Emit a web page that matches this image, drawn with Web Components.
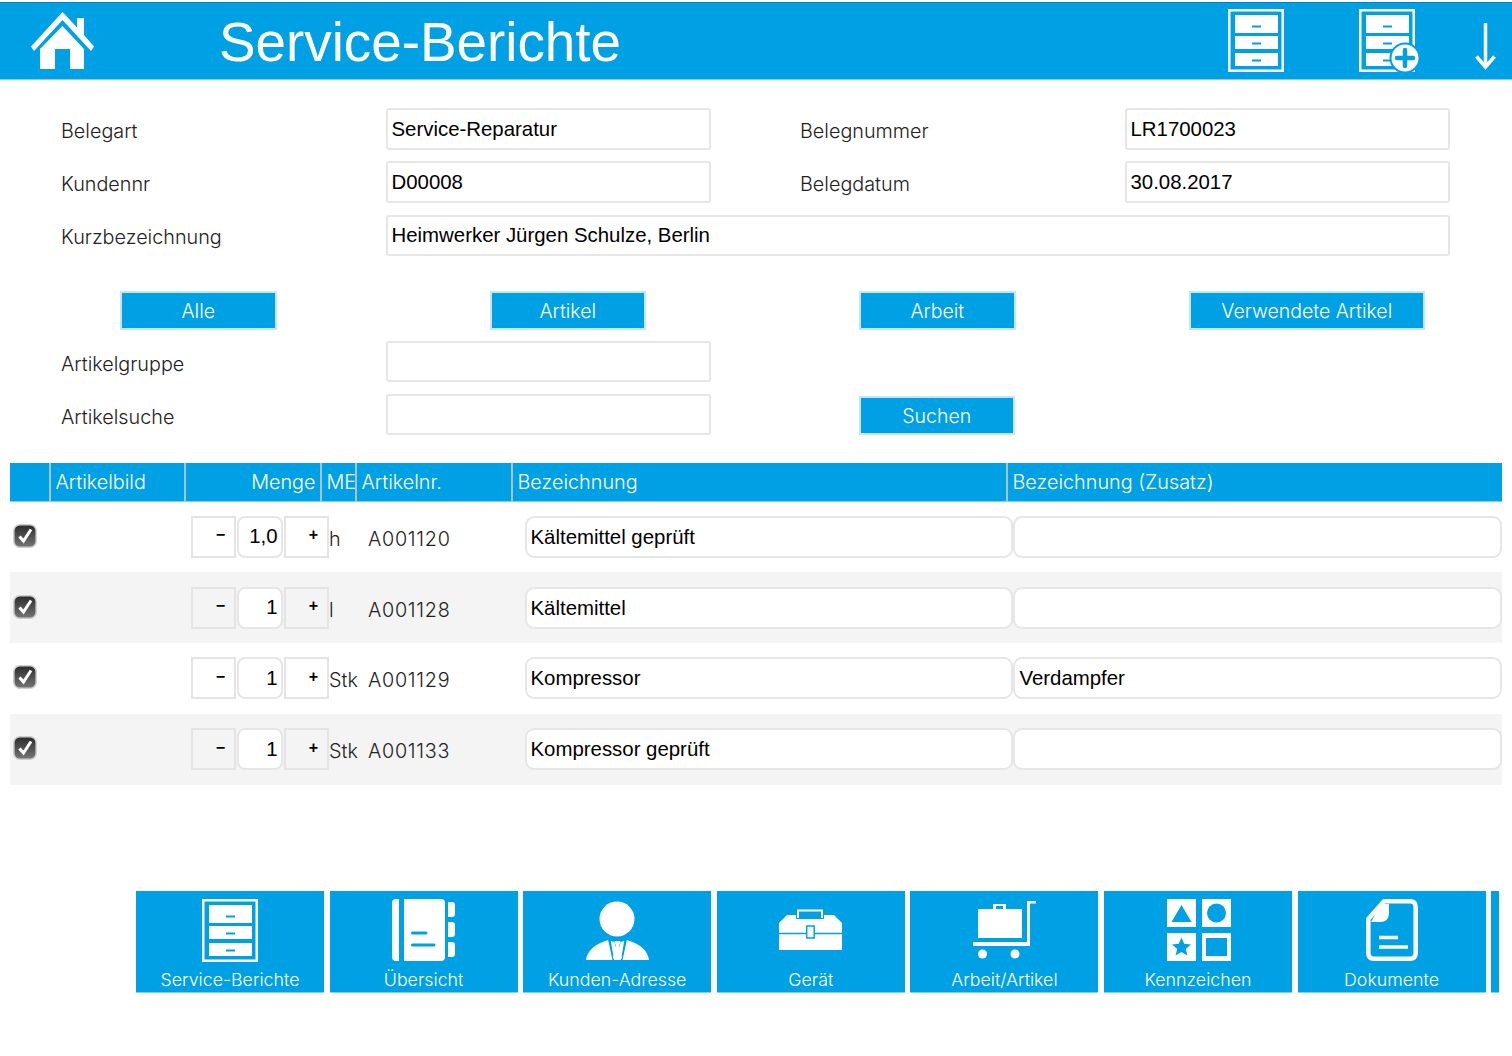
<!DOCTYPE html>
<html lang="de"><head><meta charset="utf-8"><title>Service-Berichte</title>
<style>
html,body{margin:0;padding:0;background:#fff}
body{width:1512px;height:1056px;overflow:hidden;font-family:"Liberation Sans",Arial,sans-serif;color:#1c1c1c}
main{display:flex;flex-direction:column}
</style></head><body>
<main>
<sb-header title-text="Service-Berichte"></sb-header>
<sb-form style="margin-top:28px">
 <sb-label>Belegart</sb-label><sb-input>Service-Reparatur</sb-input><span></span><sb-label>Belegnummer</sb-label><sb-input>LR1700023</sb-input>
 <sb-label>Kundennr</sb-label><sb-input>D00008</sb-input><span></span><sb-label>Belegdatum</sb-label><sb-input>30.08.2017</sb-input>
 <sb-label>Kurzbezeichnung</sb-label><sb-input style="grid-column:2/6">Heimwerker Jürgen Schulze, Berlin</sb-input>
</sb-form>
<sb-filters>
 <sb-button>Alle</sb-button><sb-button>Artikel</sb-button><sb-button>Arbeit</sb-button><sb-button style="width:235.5px">Verwendete Artikel</sb-button>
</sb-filters>
<sb-form style="margin-top:11px;row-gap:11.5px;grid-auto-rows:41.5px">
 <sb-label style="padding-top:11.5px">Artikelgruppe</sb-label><sb-input></sb-input><span></span><span></span><span></span>
 <sb-label style="padding-top:11.5px">Artikelsuche</sb-label><sb-input></sb-input><span></span><sb-button style="grid-column:4/6;margin:2px 0 0 58.5px">Suchen</sb-button>
</sb-form>
<sb-thead style="margin-top:27.5px"></sb-thead>
<sb-row qty="1,0" unit="h" nr="A001120" name="Kältemittel geprüft"></sb-row>
<sb-row alt qty="1" unit="l" nr="A001128" name="Kältemittel"></sb-row>
<sb-row qty="1" unit="Stk" nr="A001129" name="Kompressor" extra="Verdampfer"></sb-row>
<sb-row alt qty="1" unit="Stk" nr="A001133" name="Kompressor geprüft"></sb-row>
<sb-toolbar>
 <sb-tile icon="cabinet">Service-Berichte</sb-tile>
 <sb-tile icon="book">Übersicht</sb-tile>
 <sb-tile icon="person">Kunden-Adresse</sb-tile>
 <sb-tile icon="toolbox">Gerät</sb-tile>
 <sb-tile icon="cart">Arbeit/Artikel</sb-tile>
 <sb-tile icon="shapes">Kennzeichen</sb-tile>
 <sb-tile icon="doc">Dokumente</sb-tile>
 <sb-tile style="width:8px"></sb-tile>
</sb-toolbar>
</main>
<script>
const BLUE='#00a0e4', LIGHT='"Inter","Liberation Sans",sans-serif';
const cabinet=`<path fill-rule="evenodd" d="M0 0H56V63H0ZM2.500 2.500V60.500H53.500V2.500Z" fill="#fff"/><path fill="#fff" d="M7 6H50V24H7ZM7 27H50V40H7ZM7 44H50V57H7Z"/><path stroke="${BLUE}" stroke-width="2" d="M24 17.500H33M24 34.500H33M24 51.500H33"/>`;
const ICONS={
 cabinet:[56,63,cabinet],
 cabadd:[60,63,cabinet+`<circle cx="46" cy="49" r="15.500" fill="${BLUE}"/><circle cx="46" cy="49" r="13.500" fill="#fff"/><path stroke="${BLUE}" stroke-width="4.500" stroke-linecap="round" d="M38 49H54M46 41V57"/>`],
 arrow:[21,47,`<path fill="none" stroke="#fff" stroke-width="3.500" d="M10.500 0V44M1.500 33.500L10.500 44L19.500 33.500"/>`],
 home:[63,57,`<path fill="#fff" d="M31.500 0L46 15.500V6H53V23L63 34.500L60 39L31.500 8L3 39L0 34.500ZM31.500 14L53 37V57H39V37H24V57H9V37Z"/>`],
 book:[63,62,`<path fill="#fff" d="M7 0V62H4Q0 62 0 58V4Q0 0 4 0ZM12 0H49Q53 0 53 4V58Q53 62 49 62H12ZM56 3H60Q63 3 63 6V15Q63 18 60 18H56ZM56 23H60Q63 23 63 26V35Q63 38 60 38H56ZM56 43H60Q63 43 63 46V55Q63 58 60 58H56Z"/><path stroke="${BLUE}" stroke-width="3" stroke-linecap="round" d="M20.500 34H34M20.500 46H42"/>`],
 person:[63,61,`<circle cx="31" cy="19" r="17.500" fill="#fff"/><path fill="#fff" d="M0 60Q2 46 22 40L31.500 43L41 40Q61 46 63 60Z"/><path fill="${BLUE}" d="M22 39.500L24.500 39L28 60H26.500ZM41 39.500L38.500 39L35 60H36.500ZM28 40H35L33.300 47H29.700Z"/><path fill="#fff" d="M28.500 41H34.500L33 46.500L36 58L31.500 60L27 58L30 46.500Z"/>`],
 toolbox:[63,42,`<path fill="none" stroke="#fff" stroke-width="2" d="M19 9V1.500H43V9"/><path fill="#fff" d="M0 14L8 6H17V10H45V6H55L63 14V23.700H0ZM0 25.300H63V41H0Z"/><rect x="27.700" y="17" width="7.500" height="12" fill="#fff" stroke="${BLUE}" stroke-width="1.500"/>`],
 cart:[64,58,`<path fill="#fff" d="M5 8H49V37H5ZM20 3H33V8H30V5H23V8H20ZM54 0H63V2.500H57V45H0V41H54Z"/><circle cx="9.500" cy="53" r="4.500" fill="#fff"/><circle cx="42" cy="53" r="4.500" fill="#fff"/>`],
 shapes:[64,62,`<path fill="#fff" d="M0 0H29V28H0ZM35 0H64V28H35ZM0 34H29V62H0ZM35 34H64V62H35Z"/><path fill="${BLUE}" d="M14.500 6L24.500 23H4.500Z"/><circle cx="49.500" cy="14" r="9.500" fill="${BLUE}"/><path fill="${BLUE}" d="M14.500 38.500L17.200 44.800L24 45.400L18.800 49.900L20.400 56.500L14.500 53L8.600 56.500L10.200 49.900L5 45.400L11.800 44.800Z"/><rect x="39" y="39" width="21" height="18" fill="${BLUE}"/>`],
 doc:[52,62,`<path fill="none" stroke="#fff" stroke-width="4.500" stroke-linejoin="round" d="M18 2.300H44Q49.700 2.300 49.700 8V54Q49.700 59.700 44 59.700H8Q2.300 59.700 2.300 54V20Z"/><path fill="#fff" d="M15 5H23V14Q23 23 14 23H5Z"/><path stroke="#fff" stroke-width="3.500" d="M13 38.500H32M13 48H42"/>`]
};
function svg(n,s=''){const[w,h,b]=ICONS[n];return `<svg width="${w}" height="${h}" viewBox="0 0 ${w} ${h}" style="display:block;${s}" aria-hidden="true">${b}</svg>`}
function def(name,css,html){
 customElements.define(name,class extends HTMLElement{
  constructor(){super();this.attachShadow({mode:'open'})}
  connectedCallback(){this.shadowRoot.innerHTML=`<style>${css}</style>`+(typeof html==='function'?html(this):html)}
 });
}
def('sb-header',`:host{display:flex;box-sizing:border-box;height:78px;margin-top:2px;background:${BLUE};border-top:1px solid #0680b8;border-bottom:1px solid #7fd0f2;align-items:flex-start}
.home{margin:9px 0 0 31px}
h1{margin:6px 0 0 125px;font:400 54.800px/66px "Liberation Sans",Arial,sans-serif;color:#fff;flex:1}
.a{margin:6px 0 0}.b{margin:6px 0 0 75px}.c{margin:20px 16px 0 56px}`,
 h=>`<div class="home">${svg('home')}</div><h1>${h.getAttribute('title-text')}</h1><div class="a">${svg('cabinet')}</div><div class="b">${svg('cabadd')}</div><div class="c">${svg('arrow')}</div>`);
def('sb-form',`:host{display:grid;grid-template-columns:325px 325px 89px 325px 325px;row-gap:12px;padding-left:61px;grid-auto-rows:41.250px}`,`<slot></slot>`);
def('sb-label',`:host{display:block;font:300 19.800px/24px ${LIGHT};color:#222;padding-top:10.500px}`,`<slot></slot>`);
def('sb-input',`:host{display:flex;align-items:center;box-sizing:border-box;width:calc(100% - .5px);height:41.500px;border:2px solid #e6e6e6;border-radius:var(--r,3px);background:#fff;padding:1px 3.500px 0;font:20.400px "Liberation Sans",Arial,sans-serif;color:#000;white-space:nowrap}`,`<slot></slot>`);
def('sb-button',`:host{display:flex;align-items:center;justify-content:center;box-sizing:border-box;width:156.500px;height:39px;padding-top:2px;background:${BLUE};border:2px solid #c5e6f5;color:#fff;font:300 19.500px/24px ${LIGHT}}`,`<slot></slot>`);
def('sb-filters',`:host{display:grid;grid-template-columns:369.500px 369.500px 330px auto;padding-left:120px;margin-top:35px}`,`<slot></slot>`);
def('sb-thead',`:host{display:grid;grid-template-columns:41px 135px 136px 35px 156px 495px 1fr;box-sizing:border-box;margin-left:9.500px;width:1492.500px;height:38.750px;background:${BLUE};border-bottom:1px solid #7fd0f2;color:#fff;font:300 19.800px/38px ${LIGHT}}
div{border-right:2px solid #a9c3d0;padding:0 0 0 5px;white-space:nowrap;overflow:hidden}div:last-child{border:0}.r{text-align:right;padding:0 4px 0 0}`,
 `<div></div><div>Artikelbild</div><div class="r">Menge</div><div>ME</div><div>Artikelnr.</div><div>Bezeichnung</div><div>Bezeichnung (Zusatz)</div>`);
def('sb-check',`:host{display:block;width:24px;height:24px}`,`<svg width="24" height="24" viewBox="0 0 24 24" style="display:block"><defs><linearGradient id="g" x1="0" y1="0" x2="0" y2="1"><stop offset="0" stop-color="#2a2a2a"/><stop offset="1" stop-color="#777"/></linearGradient></defs><rect x=".8" y=".8" width="22.400" height="22.400" rx="6" fill="url(#g)" stroke="#cfcfcf" stroke-width="1.600"/><path fill="none" stroke="#fff" stroke-width="3" d="M6.500 12.500L10.500 17L18 5.500"/></svg>`);
def('sb-stepper',`:host{display:grid;grid-template-columns:45px 48px 45px;width:138px;height:42px;font:20.400px "Liberation Sans",Arial,sans-serif;color:#000}
.s{box-sizing:border-box;border:2px solid #e4e4e4;display:flex;align-items:center;justify-content:flex-end;padding-right:9px;font-size:16px;font-weight:700;padding-bottom:3px;background:var(--step,#fff)}
.m{box-sizing:border-box;border:2px solid #e6e6e6;border-radius:8px;background:#fff;display:flex;align-items:center;justify-content:flex-end;padding-right:3.500px;margin:0 1px;font:20.400px "Liberation Sans",Arial,sans-serif}`,
 h=>`<div class="s">−</div><div class="m">${h.getAttribute('qty')}</div><div class="s">+</div>`);
def('sb-row',`:host{display:grid;grid-template-columns:181.500px 138px 39px 157px 488px 1fr;align-items:center;box-sizing:border-box;margin-left:9.500px;width:1492.500px;height:70.800px;color:#222;font:300 19.800px/24px ${LIGHT}}
:host([alt]){background:#f4f4f4;--step:#f4f4f4}
sb-check{margin:0 0 2px 3.500px}
sb-input{--r:9px;height:42px}sb-input:last-child{padding-left:4.500px}.u,.n{padding:4px 0 0}.n{letter-spacing:.7px}`,
 h=>{const a=k=>h.getAttribute(k)||'';return `<div><sb-check></sb-check></div><sb-stepper qty="${a('qty')}"></sb-stepper><div class="u">${a('unit')}</div><div class="n">${a('nr')}</div><sb-input>${a('name')}</sb-input><sb-input>${a('extra')}</sb-input>`});
def('sb-toolbar',`:host{display:flex;gap:5.600px;padding-left:136px;margin-top:106.500px}`,`<slot></slot>`);
def('sb-tile',`:host{display:flex;flex-direction:column;align-items:center;box-sizing:border-box;width:188px;height:101.500px;background:${BLUE};border-bottom:1px solid #7fd0f2;padding-top:8px;color:#fff;font:300 17.800px/22px ${LIGHT}}
.i{height:62px;display:flex;align-items:center}.t{margin-top:8px;white-space:nowrap}`,
 h=>{const n=h.getAttribute('icon');return n?`<div class="i">${svg(n,(n==='cart'||n==='shapes')?'margin-left:2px':'')}</div><div class="t"><slot></slot></div>`:''});
</script>
</body></html>
